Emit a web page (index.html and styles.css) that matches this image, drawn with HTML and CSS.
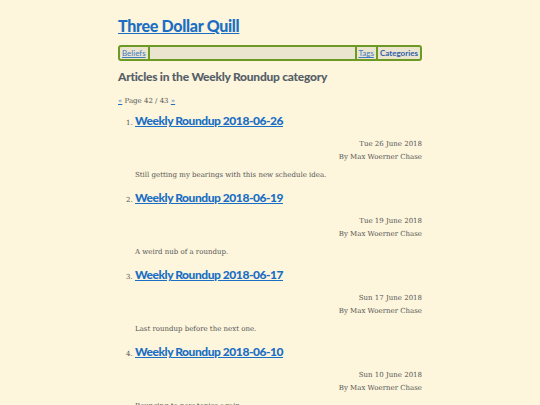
FILE: index.html
```html
<!DOCTYPE html>
<html lang="en">
<head>
    <meta charset="UTF-8">
    <meta name="viewport" content="width=device-width, initial-scale=1.0">
    <title>Weekly Roundup - Three Dollar Quill</title>
    <link rel="stylesheet" href="styles.css">
</head>
<body>
    <div class="page">
        <h1 class="site-title"><a href="#">Three Dollar Quill</a></h1>
        <nav class="site-nav">
            <a href="#" class="nav-item">Beliefs</a>
            <span class="nav-fill"></span>
            <a href="#" class="nav-item nav-left">Tags</a>
            <a href="#" class="nav-item nav-left nav-current">Categories</a>
        </nav>
        <h2 class="page-heading">Articles in the Weekly Roundup category</h2>
        <p class="pager"><a href="#">&laquo;</a> Page 42 / 43 <a href="#">&raquo;</a></p>
        <ol class="articles" start="1">
            <li class="article">
                <h3 class="article-title"><a href="#">Weekly Roundup 2018-06-26</a></h3>
                <div class="article-meta">
                    <div>Tue 26 June 2018</div>
                    <div>By Max Woerner Chase</div>
                </div>
                <p class="article-summary">Still getting my bearings with this new schedule idea.</p>
            </li>
            <li class="article">
                <h3 class="article-title"><a href="#">Weekly Roundup 2018-06-19</a></h3>
                <div class="article-meta">
                    <div>Tue 19 June 2018</div>
                    <div>By Max Woerner Chase</div>
                </div>
                <p class="article-summary">A weird nub of a roundup.</p>
            </li>
            <li class="article">
                <h3 class="article-title"><a href="#">Weekly Roundup 2018-06-17</a></h3>
                <div class="article-meta">
                    <div>Sun 17 June 2018</div>
                    <div>By Max Woerner Chase</div>
                </div>
                <p class="article-summary">Last roundup before the next one.</p>
            </li>
            <li class="article">
                <h3 class="article-title"><a href="#">Weekly Roundup 2018-06-10</a></h3>
                <div class="article-meta">
                    <div>Sun 10 June 2018</div>
                    <div>By Max Woerner Chase</div>
                </div>
                <p class="article-summary">Bouncing to new topics again.</p>
            </li>
        </ol>
    </div>
</body>
</html>
```

FILE: styles.css
```css
body{
    margin: 0px;
    background: #fdf5dc;
    font-family: "DejaVu Serif", serif;
    color: #555555;
}
a{
    color: #1a6fc4;
}
.page{
    width: 304px;
    margin: 0px auto;
    padding-top: 15px;
}
.site-title{
    margin: 0px;
    font-family: Lato, sans-serif;
    font-size: 16px;
    letter-spacing: -0.3px;
    line-height: 22px;
    font-weight: 900;
}
.site-nav{
    display: flex;
    margin-top: 8px;
    height: 12px;
    border: 2px solid #6c9a22;
    border-radius: 3px;
    background: #ebe4cf;
    font-family: Lato, sans-serif;
    font-size: 8px;
    line-height: 12px;
}
.nav-item{
    padding: 0px 2px;
    color: #3e7bc0;
    border-right: 2px solid #6c9a22;
}
.nav-fill{
    flex: 1;
}
.nav-left{
    border-left: 0px;
}
.nav-fill + .nav-left{
    border-left: 2px solid #6c9a22;
}
.nav-current{
    border-right: 0px;
    font-weight: 700;
    text-decoration: none;
    color: #2d62a8;
}
.page-heading{
    margin: 7px 0px 0px 0px;
    font-family: Lato, sans-serif;
    font-size: 12px;
    letter-spacing: -0.25px;
    line-height: 18px;
    font-weight: 900;
    color: #566068;
}
.pager{
    margin: 10px 0px 0px 0px;
    font-size: 7px;
    line-height: 10px;
}
.articles{
    margin: 6px 0px 0px 0px;
    padding-left: 17px;
    font-size: 7px;
}
.article{
    margin-bottom: 9px;
}
.article-title{
    margin: 0px;
    font-family: Lato, sans-serif;
    font-size: 12px;
    letter-spacing: -0.45px;
    line-height: 18px;
    font-weight: 900;
}
.article-meta{
    margin-top: 8px;
    text-align: right;
    font-size: 7px;
    line-height: 13px;
}
.article-summary{
    margin: 6px 0px 0px 0px;
    font-size: 7px;
    line-height: 10px;
}
```
